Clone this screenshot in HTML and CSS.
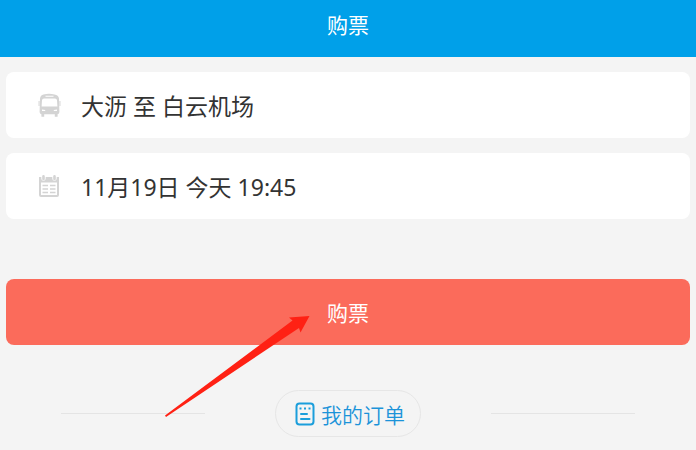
FILE: index.html
```
<!DOCTYPE html>
<html lang="zh-CN">
<head>
    <meta charset="UTF-8">
    <meta name="viewport" content="width=device-width, initial-scale=1">
    <title>购票</title>
    <link rel="stylesheet" href="styles.css">
</head>

<body>
<header class="header">
    <h1>购票</h1>
</header>

<main class="content">
    <button type="button" class="field">
        <svg class="field-icon" viewBox="0 0 24 24" width="24" height="24">
            <path fill="#d4d4d4" fill-rule="evenodd" d="M6.5 1.5Q12 0 17.5 1.5Q21.5 2 22 5.5L22.4 19Q22.4 21 20.6 21.2V23.8H17.8V21.2H7.2V23.8H4.4V21.2Q2.6 21 2.6 19L3 5.5Q3.5 2 6.5 1.5ZM8.5 2.8V3.8H16.5V2.8ZM7 5.6Q5.2 5.6 5 7.2L4.6 13.5H20.4L20 7.2Q19.8 5.6 18 5.6ZM5 16.4V18H8.2V17ZM20 16.4V18H16.8V17Z"/>
            <path fill="#e0e0e0" d="M1.4 8H2.8V13H1.4ZM22.2 8H23.6V13H22.2Z"/>
        </svg>
        <span>大沥 至 白云机场</span>
    </button>

    <button type="button" class="field">
        <svg class="field-icon" viewBox="0 0 24 24" width="24" height="24">
            <rect x="3" y="4" width="18" height="18" rx="1" fill="#fff" stroke="#d4d4d4" stroke-width="2"/>
            <path fill="#d4d4d4" d="M2 3H22V8.5H2Z"/>
            <path stroke="#fff" stroke-width="4.4" stroke-linecap="round" d="M6.5 0V4.5M17.5 0V4.5"/>
            <path stroke="#d4d4d4" stroke-width="2.6" stroke-linecap="round" d="M6.5 2.4V5M17.5 2.4V5"/>
            <path stroke="#d4d4d4" stroke-width="1.6" d="M5.5 11.5H11M13 11.5H18.5M5.5 15H11M13 15H18.5M5.5 18.5H11M13 18.5H18.5"/>
        </svg>
        <span>11月19日 今天 19:45</span>
    </button>

    <button type="button" class="buy">购票</button>
</main>

<nav class="orders">
    <a href="#orders" class="orders-link">
        <svg viewBox="0 0 20 24" width="20" height="24" fill="none" stroke="#1b9edb" stroke-width="2">
            <rect x="1.5" y="1.5" width="17" height="21" rx="3"/>
            <path d="M4.5 6.5H6.5M9 6.5H11M13.5 6.5H15.5"/>
            <path stroke-linecap="round" d="M6 12H12M6 17H14.5"/>
        </svg>
        <span>我的订单</span>
    </a>
</nav>

<!-- points at the buy button -->
<svg class="arrow" viewBox="0 0 146 102" width="146" height="102">
    <path fill="#ff2114" d="M0 100.5L127.5 5.5L124 2.5L144.5 1L135.5 17.5L134 13L1 102Z"/>
</svg>
</body>
</html>
```

FILE: styles.css
```
* {
    box-sizing: border-box;
}
body {
    position: relative;
    margin: 0;
    background-color: #f4f4f4;
    color: #333;
    font-family: "Noto Sans", "Noto Sans CJK SC", sans-serif;
}
button {
    border: 0;
    font-family: inherit;
    cursor: pointer;
}
.header {
    padding-bottom: 7px;
    background-color: #00a0e9;
    color: #fff;
    text-align: center;
}
.header h1 {
    margin: 0;
    font-size: 21px;
    font-weight: 400;
    line-height: 50px;
}
.content {
    display: flex;
    flex-direction: column;
    gap: 15px;
    padding: 15px 6px 0;
}
.field {
    display: flex;
    align-items: center;
    gap: 20px;
    height: 66px;
    padding: 0 31px;
    border-radius: 8px;
    background-color: #fff;
    color: #333;
    font-size: 23px;
    font-weight: 400;
    text-align: left;
}
.field-icon {
    flex: none;
}
.buy {
    height: 66px;
    margin-top: 45px;
    border-radius: 8px;
    background-color: #fb6b5b;
    color: #fff;
    font-size: 21px;
    font-weight: 400;
}
.orders {
    display: flex;
    align-items: center;
    gap: 70px;
    padding: 45px 61px 13px;
}
.orders::before,
.orders::after {
    content: "";
    flex: 1;
    height: 1px;
    background-color: #e4e4e4;
}
.orders-link {
    display: flex;
    align-items: center;
    gap: 6px;
    height: 47px;
    padding: 0 15px 0 19px;
    border: 1px solid #e6e6e6;
    border-radius: 24px;
    color: #1b93d9;
    font-size: 21px;
    font-weight: 350;
    text-decoration: none;
}
.arrow {
    position: absolute;
    top: 315px;
    left: calc(50% - 183px);
    pointer-events: none;
}
```
